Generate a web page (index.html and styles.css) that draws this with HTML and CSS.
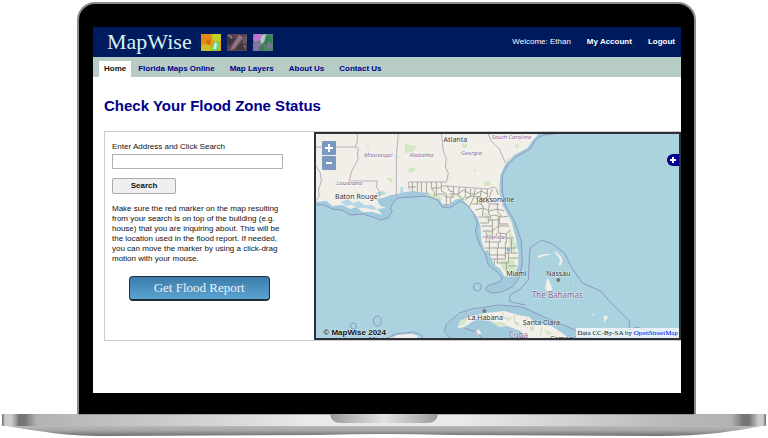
FILE: index.html
```html
<!DOCTYPE html>
<html lang="en">
<head>
<meta charset="utf-8">
<meta name="viewport" content="width=device-width, initial-scale=1">
<title>MapWise - Flood Zone Status</title>
<link rel="stylesheet" href="styles.css">
</head>
<body>
<div class="laptop">
  <div class="lid">
    <div class="screen">
      <header class="header">
        <a class="brand" href="#">MapWise</a>
        <div class="thumbs">
          <svg class="thumb" viewBox="0 0 20 17" preserveAspectRatio="none" aria-hidden="true">
            <rect width="20" height="17" fill="#d9a419"/>
            <path d="M0 0h9l3 5-5 4-7 1z" fill="#e28a10"/>
            <path d="M11 0h9v7l-5 1-4-3z" fill="#bfd02a"/>
            <path d="M0 12l6-2 5 3-2 4H0z" fill="#c9be22"/>
            <path d="M6 5l4 2-1 4-4-1z" fill="#d86b12"/>
            <path d="M14 7l5 1v7l-5 2-4-1 2-4z" fill="#6fd36d"/>
            <path d="M14 8l2 2-1 5-3 0 1-3z" fill="#b9fbf4"/>
          </svg>
          <svg class="thumb" viewBox="0 0 20 17" preserveAspectRatio="none" aria-hidden="true">
            <rect width="20" height="17" fill="#57444f"/>
            <path d="M0 4l5-3 3 4-5 6H0z" fill="#39323f"/>
            <path d="M12 1l4 2-4 6-5 6-4 1 4-7z" fill="#94747f"/>
            <path d="M15 4l5-3v9l-4-1z" fill="#6f5661"/>
            <path d="M10 12l5-3 4 4-2 3h-7z" fill="#403743"/>
            <path d="M1 1l3 0 2 3-2 1zM16 11l3 1-1 3z" fill="#8a6f78"/>
          </svg>
          <svg class="thumb" viewBox="0 0 20 17" preserveAspectRatio="none" aria-hidden="true">
            <rect width="20" height="17" fill="#57836e"/>
            <path d="M2 0h7l-2 6-5 2-2-3z" fill="#c173cf"/>
            <path d="M0 9l6-1 3 4-4 5H0z" fill="#84759a"/>
            <path d="M9 1l4-1-1 7-4 3-1-4z" fill="#b9c4c9"/>
            <path d="M13 2h5l1 7-5 4-3-4z" fill="#2e8451"/>
            <path d="M14 10l3-3 1 5-3 3z" fill="#8c6fa0"/>
            <path d="M6 13l4-2 2 5-5 1z" fill="#3a7d58"/>
          </svg>
        </div>
        <div class="account">
          <span>Welcome: Ethan</span>
          <a href="#">My Account</a>
          <a href="#">Logout</a>
        </div>
      </header>
      <nav class="nav">
        <a class="tab current" href="#">Home</a>
        <a class="tab" href="#">Florida Maps Online</a>
        <a class="tab" href="#">Map Layers</a>
        <a class="tab" href="#">About Us</a>
        <a class="tab" href="#">Contact Us</a>
      </nav>
      <main class="main">
        <h1>Check Your Flood Zone Status</h1>
        <div class="finder">
          <form class="panel">
            <label for="address">Enter Address and Click Search</label>
            <input id="address" class="address" type="text">
            <button class="search" type="button">Search</button>
            <p>Make sure the red marker on the map resulting from your search is on top of the building (e.g. house) that you are inquiring about. This will be the location used in the flood report. If needed, you can move the marker by using a click-drag motion with your mouse.</p>
            <button class="report" type="button">Get Flood Report</button>
          </form>
          <div class="map">
            <svg class="tiles" viewBox="315 133 364 204" preserveAspectRatio="xMidYMid slice" role="img" aria-label="Map of Florida and the Bahamas">
              <rect x="0" y="0" width="1000" height="600" fill="#aad3df"/>
              <!-- coastal waters -->
              <path class="shelf" d="M315 204L323 204L332 208L341 209L350 214L363 213L372 216L380 219L388 217L392 210L390 207L394 200L398 197L412 196L427 195L437 199L442 206L449 207L460 200L467 204L473 212L477 222L475 230L479 243L485 253L488 264L498 272L502 277L499 281L487 285L485 289L491 292L501 291L512 286L519 276L522 262L521 240L515 222L505 204L502 190L502 174L508 163L517 155L530 148L535 139L543 134L553 133L315 133Z"/>
              <!-- mainland -->
              <path class="land" d="M315 133H538L531 141L527 147L514 154L505 163L500 174L499 190L502 204L511 220L515 235L518 251L518 264L515 271L510 276L504 275L500 268L494 264L490 255L487 249L484 250L481 239L480 225L477 216L470 208L462 198L456 198L449 203L442 203L438 196L428 192L413 190L405 191L391 194L382 197L376 198L380 205L386 207L377 208L382 214L372 211L362 211L356 206L350 208L342 204L332 205L326 200L315 201Z"/>
              <path class="marsh" d="M340 201l8-3 4 4 7-2 5 4 8 0 5 4-4 1-8-2-7 0-7-3-6 1zM375 192l8-2 3 3-7 2zM400 186l3 0 0 6-3 0zM514 242l3 3-1 3-3-3z"/>
              <path class="wood" d="M322 158l5 2-3 3zM405 143l12 2-5 6-8 1zM424 152l6 0 1 4-7-1zM408 168l4-2 4 3-7 3zM386 177l7 0-2 5zM462 142l5 1-1 4-5-1zM484 180l6 0 0 5-6 0zM356 190l4 4-4 2zM424 193l13 0 6 6-9-2zM448 192l12 2 8 7-8-4zM482 210l6 4-2 6zM508 225l6 15 1 14-6-8zM500 260l14-2 1 11-7 5-6-7zM487 228l6 6-4 3zM340 180l4 1-1 3zM396 154l3 1-1 2zM448 176l3 1-2 2zM473 168l4 1-3 2zM366 144l4 1-3 2zM514 142l5 3-3 3zM505 160l4-4 0 4z"/>
              <!-- state borders -->
              <path class="state" d="M357 133l0 8-2 4 3 3-1 6 1 4-4 7-3 6-2 9H377l-1 6 3 4 0 6M315 146H356M398 133l-2 22 0 40M441 133l2 17 3 8-1 8 3 6-2 9H408l1 8M447 185l41 3 4-2 4 1M488 133l3 7 8 8 6 14M315 164l5 8 1 8-3 9 1 6-4 6"/>
              <!-- county lines -->
              <path class="county" d="M412 181v10M417 181v9M421 181v10M426 181v11M431 181v6l3 4v4M436 181v14M441 181v9l5 3v12M408 186h8M431 187h8l3-2h5M436 193h6l4 3h8M447 185l2 5 5 1M453 186v7l-3 5v5M459 186l-1 8 4 5M465 187v8l-3 4M470 188v7l-5 4M475 188l-2 9-4 9M481 188l-1 7-5 3M487 188v8l-6 4M449 193h9l5-4 7 4h5l6-3 6 3M465 197l7-2 8 1 7 4M492 188l-3 8 4 5 7-4M496 188l2 6M472 203h8l4-3 7 3h8M475 209l8-2 6 3 8-2 7 2M480 200l3 7-1 8M489 203l-1 8 3 8M497 202v8l4 5M478 216h10l5-2 9 2 6-1M480 222h8v-6M488 219h9l2-3M481 225h11v-6M499 216v7h9M482 230h10l6-5h11M492 225v14M498 217v15l8 1 4-4M482 236h14v-4M486 230v10M484 241h16v-9M484 247h14v-6M489 236v18M500 237h13M506 233v9M498 247h18M505 241v15M511 238v14M489 254h16M491 258h14v-6M497 247v15M505 252h12M496 262h12v-10M508 257h10M506 262v8M508 265h9M494 258v6"/>
              <path d="M506 247l3 0 1 3-3 1z" fill="#79b5da"/>
              <!-- Cuba, Yucatan and the Bahamas -->
              <path class="shelf" d="M447 336L444 328L452 318L466 311L486 307L508 305L526 307L548 318L570 328L590 334L640 334L640 338H447Z"/>
              <path class="land" d="M457 327L460 320L471 315L486 312L504 310L518 314L529 316L535 322L551 325L562 332L569 338H527L520 330L507 325L499 326L490 320L476 318L464 326ZM475 332l3-4 3 4-3 3zM390 338l7-4 14-1 7 2-3 3z"/>
              <path class="wood" d="M458 325l4-6 5-2-3 7zM490 321l12 0 5 4-8 0zM528 325l7 2-3 4zM544 328l8 4-5 3zM505 315l8 2-4 2zM515 320l5 3-6 1z"/>
              <path class="county" d="M491 313l2 7M502 311l1 5 6 4M514 314l0 7 5 4M527 317l-4 6 4 4M534 323l-3 6M542 326l-2 8M475 315l1 4" opacity=".4"/>
              <path class="land" d="M547 277l2 3 2 5 1 3-2 3-5-2 0-4zM537 255l8-2 5 0-1 1-6 1-5 2zM553 249l4 3 4 4 1 4-2 5-2-1 2-5-3-4zM573 281l1 4-1-1zM580 287l1 3 0 1zM577 301l4 3-1 0zM591 312l3 2-1 1zM603 314l5 2-3 4-2 2 1-4zM584 304l1 3 1 2z"/>
              <path class="sea" d="M315 204L323 204L332 208L341 209L350 214L363 213L372 216L380 219L388 217L392 210L390 207L394 200L398 197L412 196L427 195L437 199L442 206L449 207L460 200L467 204L473 212L477 222L475 230L479 243L485 253L488 264L498 272L502 277L499 281L487 285L485 289L491 292L501 291L512 286L519 276L522 262L521 240L515 222L505 204L502 190L502 174L508 163L517 155L530 148L535 139L543 134L553 133"/>
              <path class="sea" d="M525 304L510 301L509 296L511 293L520 288L528 279L529 255L530 247L541 239L552 243L564 252L571 266L582 282L600 290L611 302L629 320L629 329L637 326L652 332M451 338L444 331L446 323L459 312L472 308L499 304L522 306L548 318L575 329L590 338M464 327L475 331L482 337M385 338L395 333L413 331L421 334L423 338"/>
              <ellipse class="sea" cx="477" cy="286" rx="4" ry="4"/>
              <ellipse class="sea" cx="377" cy="320" rx="4" ry="5"/>
              <ellipse class="sea" cx="353" cy="325" rx="3" ry="3"/>
              <circle class="town" cx="484" cy="310" r="2"/>
              <circle class="town" cx="558" cy="279" r="2"/>
              <g class="places">
                <text x="455" y="141">Atlanta</text>
                <text x="356" y="198">Baton Rouge</text>
                <text x="495" y="201">Jacksonville</text>
                <text x="516" y="275">Miami</text>
                <text x="558" y="275">Nassau</text>
                <text x="485" y="319">La Habana</text>
                <text x="541" y="324">Santa Clara</text>
                <text x="567" y="340">Camagüey</text>
                <text x="380" y="341">Mérida</text>
              </g>
              <g class="regions">
                <text x="378" y="156">Mississippi</text>
                <text x="421" y="156">Alabama</text>
                <text x="471" y="154">Georgia</text>
                <text x="511" y="138">South Carolina</text>
                <text x="349" y="184">Louisiana</text>
                <text x="495" y="238">Florida</text>
              </g>
              <g class="countries">
                <text x="557" y="297">The Bahamas</text>
                <text x="518" y="337">Cuba</text>
              </g>
            </svg>
            <div class="zoom">
              <button type="button" aria-label="Zoom in"><svg viewBox="0 0 14 14" aria-hidden="true"><path d="M7 3v8M3 7h8"/></svg></button>
              <button type="button" aria-label="Zoom out"><svg viewBox="0 0 14 14" aria-hidden="true"><path d="M4 7h6"/></svg></button>
            </div>
            <button class="layers" type="button" aria-label="Show layers"><svg viewBox="0 0 12 12" aria-hidden="true"><path d="M6 3v6M3 6h6"/></svg></button>
            <div class="copyright">© MapWise 2024</div>
            <div class="credit">Data CC-By-SA by <a href="#">OpenStreetMap</a></div>
          </div>
        </div>
      </main>
    </div>
  </div>
  <svg class="base" viewBox="0 0 768 24" preserveAspectRatio="none" aria-hidden="true">
    <defs>
      <linearGradient id="front">
        <stop offset="0" stop-color="#666"/><stop offset=".004" stop-color="#ccc"/>
        <stop offset=".012" stop-color="#ccc"/><stop offset=".018" stop-color="#a0a0a0"/>
        <stop offset=".022" stop-color="#757575"/><stop offset=".03" stop-color="#757575"/>
        <stop offset=".045" stop-color="#b2b2b2"/><stop offset=".25" stop-color="#d0d0d0"/>
        <stop offset=".4" stop-color="#e9e9e9"/><stop offset=".6" stop-color="#e9e9e9"/>
        <stop offset=".75" stop-color="#d0d0d0"/><stop offset=".88" stop-color="#b8b8b8"/>
        <stop offset=".955" stop-color="#b2b2b2"/><stop offset=".97" stop-color="#757575"/>
        <stop offset=".978" stop-color="#757575"/><stop offset=".99" stop-color="#ccc"/>
        <stop offset=".996" stop-color="#ccc"/><stop offset="1" stop-color="#666"/>
      </linearGradient>
      <linearGradient id="under" x2="0" y2="1">
        <stop offset="0" stop-color="#bcbcbc"/><stop offset=".5" stop-color="#a6a6a6"/>
        <stop offset="1" stop-color="#6f6f6f"/>
      </linearGradient>
      <linearGradient id="notch">
        <stop offset="0" stop-color="#999"/><stop offset=".15" stop-color="#b2b2b2"/>
        <stop offset=".5" stop-color="#e2e2e2"/><stop offset=".85" stop-color="#b2b2b2"/>
        <stop offset="1" stop-color="#999"/>
      </linearGradient>
    </defs>
    <path d="M2 11H766Q742 16 718 19Q690 22 660 22L450 21Q384 19 318 21L108 22Q70 22 46 18Q22 15 2 11Z" fill="url(#under)"/>
    <rect x="2" y="0" width="764" height="12" rx="1" fill="url(#front)"/>
    <path d="M78 0H695" stroke="#777" stroke-width="1"/>
    <path d="M330 0H438Q437 9 427 9H341Q331 9 330 0Z" fill="url(#notch)"/>
  </svg>
</div>
</body>
</html>
```
FILE: styles.css
```css
* {
  box-sizing: border-box;
}

body {
  margin: 0;
  background: #fff;
  color: #111;
  font: 8px/10px "Liberation Sans", Arial, sans-serif;
}

a {
  color: inherit;
  text-decoration: none;
}

button,
input {
  font: inherit;
}

.laptop {
  padding-top: 2px;
}

.lid {
  margin: 0 72px 0 77px;
  padding: 23px 13px 21px 14px;
  background: #000;
  border: 2px solid #8b8b8b;
  border-bottom: 0;
  border-radius: 18px 18px 0 0;
}

.screen {
  background: #fff;
  padding-bottom: 52px;
}

/* top bar */
.header {
  display: flex;
  align-items: center;
  height: 30px;
  padding: 0 6px 0 14px;
  background: #001a5e;
  color: #fff;
}

.brand {
  color: #d9f1f3;
  font: 22px/28px "Liberation Serif", "Times New Roman", serif;
}

.thumbs {
  display: flex;
  gap: 6px;
  margin-left: 9px;
}

.thumb {
  width: 20px;
  height: 17px;
}

.account {
  display: flex;
  gap: 16px;
  margin-left: auto;
}

.account a {
  font-weight: bold;
}

.nav {
  display: flex;
  align-items: flex-end;
  height: 20px;
  padding-left: 6px;
  background: #b7ccc5;
}

.tab {
  padding: 0 8px 0 7px;
  color: #00008b;
  font-weight: bold;
  line-height: 16px;
}

.current {
  padding: 0 5px;
  background: #fff;
  color: #111;
}

/* page content */
.main {
  padding: 19px 0 0 11px;
}

h1 {
  margin: 0;
  color: #00008b;
  font-size: 15px;
  line-height: 20px;
}

.finder {
  display: grid;
  grid-template-columns: 210fr 368fr;
  margin-top: 15px;
  border: 1px solid #ccc;
  border-right: 0;
}

.panel {
  display: flex;
  flex-direction: column;
  align-items: flex-start;
  padding: 10px 28px 0 7px;
}

.address {
  width: 98%;
  height: 15px;
  margin-top: 2px;
  padding: 0 3px;
  background: #fff;
  border: 1px solid #b0b0b0;
}

.search {
  width: 64px;
  height: 16px;
  margin-top: 9px;
  padding: 0;
  background: #efefef;
  border: 1px solid #aaa;
  border-radius: 2px;
  color: #111;
  font-weight: bold;
}

.panel p {
  margin: 10px 0 0;
}

.report {
  align-self: center;
  width: 141px;
  height: 25px;
  margin-top: 12px;
  padding: 0;
  background: linear-gradient(#3c7da9, #5ba3d3);
  border: 1px solid #222c35;
  border-bottom-width: 2px;
  border-radius: 4px;
  color: #e8f2f8;
  font: 13px/20px "Liberation Serif", Georgia, serif;
}

/* map */
.map {
  position: relative;
  height: 208px;
  overflow: hidden;
  border: 2px solid #2d3135;
}

.tiles {
  display: block;
  width: 100%;
  height: 100%;
}

.land {
  fill: #f2efe9;
}

.marsh {
  fill: #b5dae5;
}

.wood {
  fill: #d3e7c3;
}

.shelf {
  fill: #a0cadb;
}

.sea {
  fill: none;
  stroke: #8f98c0;
  stroke-width: 1;
}

.state {
  fill: none;
  stroke: #b9aebb;
  stroke-width: 1;
}

.county {
  fill: none;
  stroke: #a3a49b;
  stroke-width: 1;
}

.town {
  fill: #777;
}

.places,
.regions,
.countries {
  font-family: "Noto Sans", sans-serif;
  text-anchor: middle;
  paint-order: stroke;
  stroke: #ffffff99;
  stroke-width: 1;
}

.places {
  fill: #333;
  font-size: 7px;
}

.regions {
  fill: #8f6b9b;
  font-size: 6px;
  font-style: italic;
}

.countries {
  fill: #8b5f93;
  font-size: 8px;
}

.zoom {
  position: absolute;
  top: 7px;
  left: 6px;
  display: grid;
  gap: 1px;
}

.zoom button {
  width: 14px;
  height: 14px;
  padding: 0;
  background: #7b98c3;
  border: 0;
  border-radius: 1px;
}

.zoom svg,
.layers svg {
  display: block;
  fill: none;
  stroke: #fff;
  stroke-width: 2;
}

.layers {
  position: absolute;
  top: 20px;
  right: 0;
  width: 12px;
  height: 12px;
  padding: 0;
  background: #00008b;
  border: 0;
  border-radius: 6px 0 0 6px;
}

.copyright {
  position: absolute;
  bottom: 0;
  left: 7px;
  font-weight: bold;
  text-shadow: 0 0 2px #fff;
}

.credit {
  position: absolute;
  right: 0;
  bottom: 0;
  padding: 0 1px;
  background: #ffffffb3;
  font: 7px/10px "Liberation Serif", "Times New Roman", serif;
}

.credit a {
  color: #00f;
}

/* laptop base */
.base {
  display: block;
  width: 100%;
  height: 24px;
}
```
